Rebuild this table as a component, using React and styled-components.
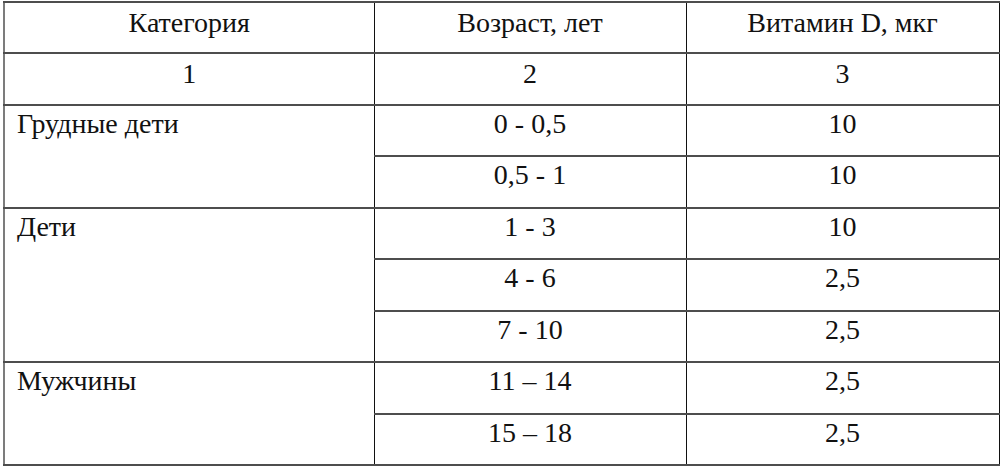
import React from "react";
import styled, { createGlobalStyle } from "styled-components";

const SERIF = `"Liberation Serif", "Times New Roman", Times, "Nimbus Roman", "Noto Serif", "DejaVu Serif", FreeSerif, serif`;

const Global = createGlobalStyle`
  html, body { margin: 0; padding: 0; background: #fff; }
  body { font-family: ${SERIF}; color: #111; }
`;

const Page = styled.div`
  padding: 1px 0 0 3px;
  font-family: ${SERIF};
`;

const Table = styled.table`
  border-collapse: collapse;
  table-layout: fixed;
  width: 996px;
  border-left: 2px solid #7c7c7c;
  border-right: 1px solid #111;
  font-size: 28px;
  line-height: 31px;
  color: #111;
`;

const Row = styled.tr`
  height: ${(p) => p.$h}px;
`;

const Cell = styled.td`
  border-top: 2px solid #4d4d4d;
  border-bottom: 2px solid #4d4d4d;
  border-left: 1px solid #111;
  border-right: 1px solid #111;
  padding: ${(p) => (p.$head ? "4px" : "2px")} 12px 0;
  vertical-align: top;
  text-align: ${(p) => (p.$left ? "left" : "center")};
  white-space: nowrap;
  font-family: ${SERIF};
  font-size: 28px;
  font-weight: 400;
`;

const rows = [
  { cat: "Грудные дети", span: 2, age: "0 - 0,5", d: "10" },
  { age: "0,5 - 1", d: "10" },
  { cat: "Дети", span: 3, age: "1 - 3", d: "10" },
  { age: "4 - 6", d: "2,5" },
  { age: "7 - 10", d: "2,5" },
  { cat: "Мужчины", span: 2, age: "11 – 14", d: "2,5" },
  { age: "15 – 18", d: "2,5" },
];

export default function App() {
  return (
    <Page>
      <Global />
      <Table>
        <colgroup>
          <col style={{ width: 370 }} />
          <col style={{ width: 312 }} />
          <col style={{ width: 313 }} />
        </colgroup>
        <tbody>
          <Row $h={51}>
            <Cell $head>Категория</Cell>
            <Cell $head>Возраст, лет</Cell>
            <Cell $head>Витамин D, мкг</Cell>
          </Row>
          <Row $h={52}>
            <Cell $head>1</Cell>
            <Cell $head>2</Cell>
            <Cell $head>3</Cell>
          </Row>
          {rows.map((r, i) => (
            <Row key={i} $h={i % 2 ? 52 : 51}>
              {r.cat && (
                <Cell $left rowSpan={r.span}>
                  {r.cat}
                </Cell>
              )}
              <Cell>{r.age}</Cell>
              <Cell>{r.d}</Cell>
            </Row>
          ))}
        </tbody>
      </Table>
    </Page>
  );
}
